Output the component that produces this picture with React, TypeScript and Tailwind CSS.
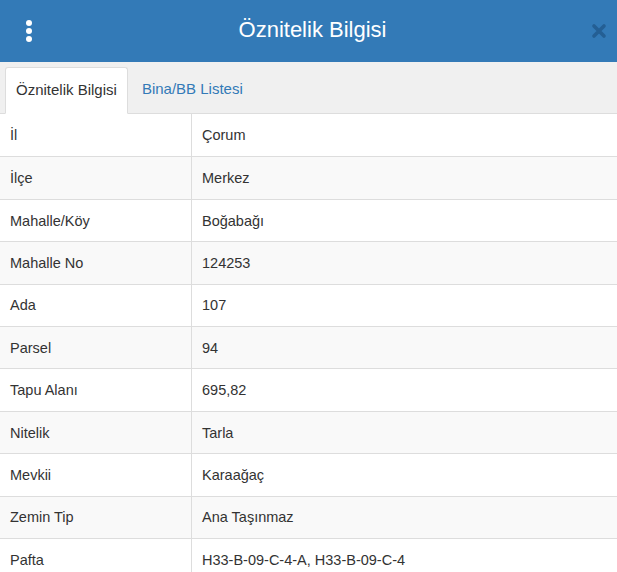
import React from 'react';

const rows: [string, string][] = [
  ['İl', 'Çorum'],
  ['İlçe', 'Merkez'],
  ['Mahalle/Köy', 'Boğabağı'],
  ['Mahalle No', '124253'],
  ['Ada', '107'],
  ['Parsel', '94'],
  ['Tapu Alanı', '695,82'],
  ['Nitelik', 'Tarla'],
  ['Mevkii', 'Karaağaç'],
  ['Zemin Tip', 'Ana Taşınmaz'],
  ['Pafta', 'H33-B-09-C-4-A, H33-B-09-C-4'],
];

const App: React.FC = () => {
  return (
    <div className="w-[617px] h-[572px] overflow-hidden bg-white text-[#333] font-['Liberation_Sans',Arial,sans-serif]">
      {/* header */}
      <div className="h-[62px] bg-[#337ab7] flex items-center justify-between px-[24px]">
        <div className="flex flex-col gap-[2px] w-[10px] items-center">
          <span className="w-[6px] h-[6px] rounded-full bg-white" />
          <span className="w-[6px] h-[6px] rounded-full bg-white" />
          <span className="w-[6px] h-[6px] rounded-full bg-white" />
        </div>
        <div className="text-white text-[22px] leading-none -mt-[2px]">Öznitelik Bilgisi</div>
        <svg width="16" height="16" viewBox="0 0 16 16" className="mr-[-14px]">
          <path d="M3 3 L13 13 M13 3 L3 13" stroke="#245f94" strokeWidth="3.6" strokeLinecap="round" />
        </svg>
      </div>

      {/* tabs */}
      <div className="h-[52px] bg-[#f0f0f0] border-b border-[#ddd] flex items-end pl-[5px]">
        <div className="h-[47px] -mb-px bg-white border border-[#ddd] border-b-white rounded-t-[3px] px-[10px] flex items-center text-[15px]">
          Öznitelik Bilgisi
        </div>
        <div className="h-[47px] px-[14px] flex items-center text-[15px] text-[#337ab7]">Bina/BB Listesi</div>
      </div>

      {/* table */}
      <div>
        {rows.map(([k, v], i) => (
          <div
            key={k}
            className={`flex h-[42.4px] border-b border-[#ddd] text-[14.5px] ${i % 2 === 1 ? 'bg-[#f9f9f9]' : 'bg-white'} ${i === 0 ? 'h-[43.4px]' : ''}`}
          >
            <div className="w-[192px] border-r border-[#ddd] pl-[10px] pt-[2px] flex items-center">{k}</div>
            <div className="flex-1 pl-[10px] pt-[2px] flex items-center">{v}</div>
          </div>
        ))}
      </div>
    </div>
  );
};

export default App;
